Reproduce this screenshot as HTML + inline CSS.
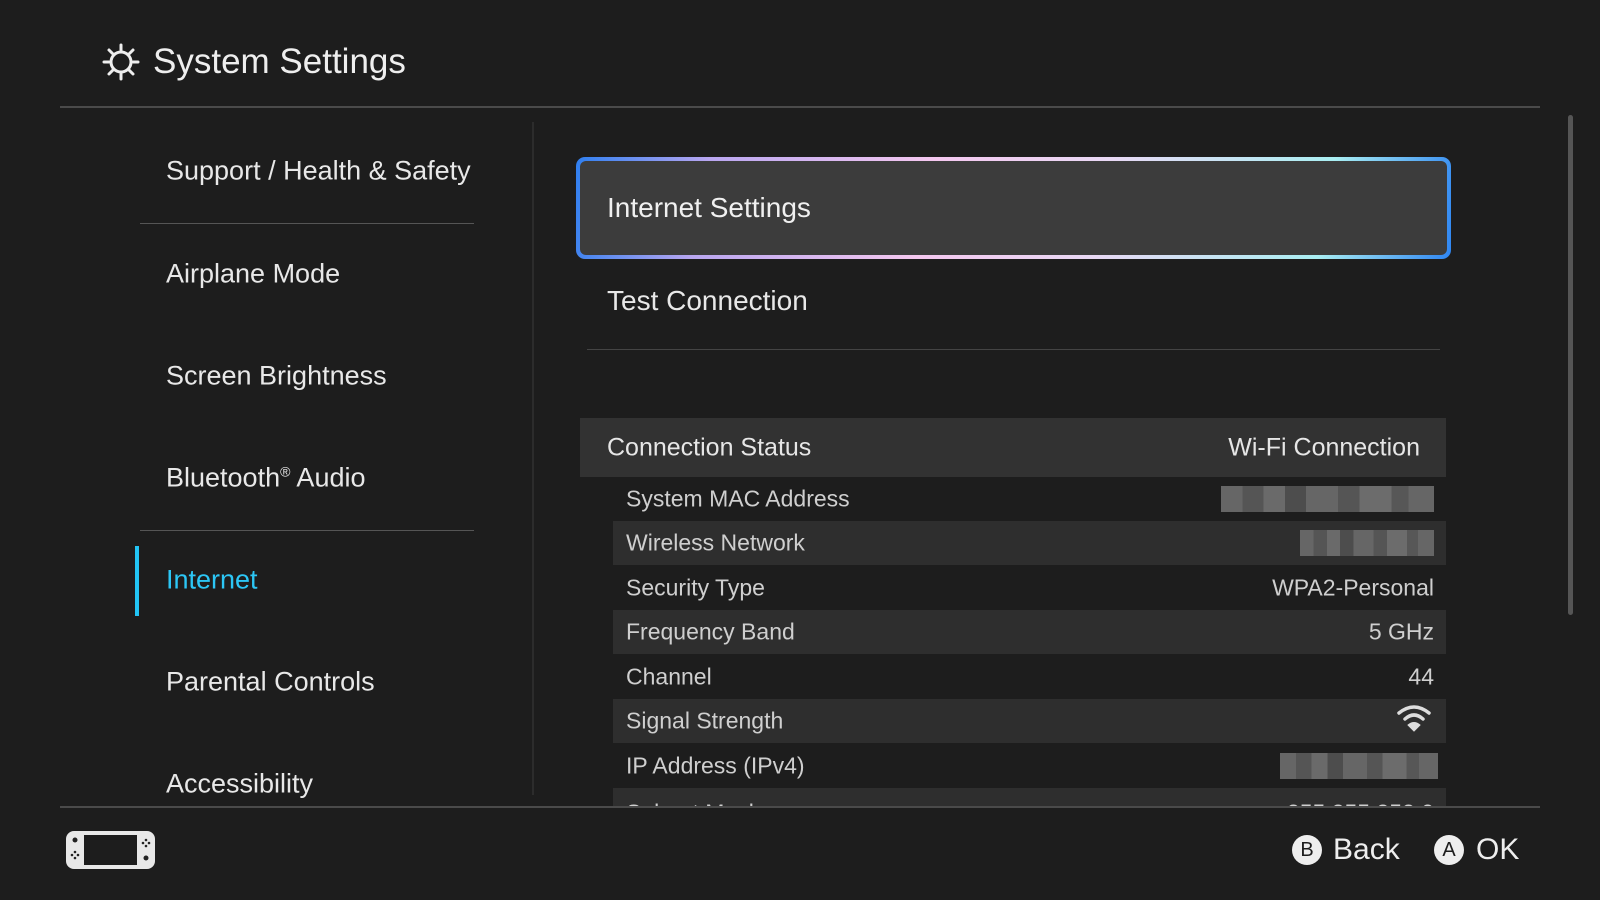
<!DOCTYPE html>
<html><head><meta charset="utf-8"><style>
*{margin:0;padding:0;box-sizing:border-box}
body{width:1600px;height:900px;background:#1d1d1d;font-family:"Liberation Sans",sans-serif;color:#e6e6e6;position:relative;overflow:hidden}
.a{position:absolute;white-space:nowrap}
.menu{left:166px;font-size:27px;color:#e8e8e8;transform:translateY(-50%)}
.hl{position:absolute;height:1px;background:#555}
.row{position:absolute;left:613px;width:833px;height:44px;font-size:23px;color:#cfcfcf}
.row.s{background:#2e2e2e}
.row span{position:absolute;top:50%;transform:translateY(-50%)}
.row .l{left:13px}.row .r{right:12px}
.blur{height:26px;background:linear-gradient(90deg,#666 0 10%,#555 10% 20%,#6a6a6a 20% 30%,#4d4d4d 30% 40%,#666 40% 55%,#555 55% 65%,#6c6c6c 65% 80%,#575757 80% 88%,#666 88%)}
</style></head><body>
<svg class="a" style="left:101px;top:42px" width="40" height="40" viewBox="0 0 40 40" fill="none" stroke="#eee" stroke-width="3"><circle cx="20" cy="20" r="10"/><g stroke-linecap="round"><line x1="20" y1="3" x2="20" y2="8"/><line x1="20" y1="32" x2="20" y2="37"/><line x1="3" y1="20" x2="8" y2="20"/><line x1="32" y1="20" x2="37" y2="20"/><line x1="8" y1="8" x2="11.5" y2="11.5"/><line x1="28.5" y1="28.5" x2="32" y2="32"/><line x1="8" y1="32" x2="11.5" y2="28.5"/><line x1="28.5" y1="11.5" x2="32" y2="8"/></g></svg>
<div class="a" style="left:153px;top:42px;font-size:35px;color:#eee">System Settings</div>
<div class="hl" style="left:60px;top:106px;width:1480px;background:#4a4a4a;height:2px"></div>

<div class="a menu" style="top:171px">Support / Health &amp; Safety</div>
<div class="hl" style="left:140px;top:223px;width:334px"></div>
<div class="a menu" style="top:274px">Airplane Mode</div>
<div class="a menu" style="top:376px">Screen Brightness</div>
<div class="a menu" style="top:478px">Bluetooth<sup style="font-size:14px">®</sup> Audio</div>
<div class="hl" style="left:140px;top:530px;width:334px"></div>
<div class="a" style="left:135px;top:546px;width:4px;height:70px;background:#22c4f4"></div>
<div class="a menu" style="top:580px;color:#2cc6f5">Internet</div>
<div class="a menu" style="top:682px">Parental Controls</div>
<div class="a menu" style="top:784px">Accessibility</div>
<div class="a" style="left:532px;top:122px;width:2px;height:673px;background:#2c2c2c"></div>

<div class="a" style="left:576px;top:157px;width:875px;height:102px;border-radius:9px;padding:4px;background:linear-gradient(100deg,#2f7ff0 0%,#b9a6f0 15%,#f4c7ef 40%,#e8d8f4 60%,#a9eef2 85%,#2f86f2 100%)">
<div style="width:100%;height:100%;background:#3c3c3c;border-radius:6px;position:relative"><span class="a" style="left:27px;top:50%;transform:translateY(-50%);font-size:28px;color:#f0f0f0">Internet Settings</span></div></div>
<div class="a menu" style="left:607px;top:301px;font-size:28px">Test Connection</div>
<div class="hl" style="left:587px;top:349px;width:853px;background:#444"></div>

<div class="a" style="left:580px;top:418px;width:866px;height:59px;background:#323232;font-size:25px;color:#e6e6e6">
<span class="a" style="left:27px;top:50%;transform:translateY(-50%)">Connection Status</span>
<span class="a" style="right:26px;top:50%;transform:translateY(-50%)">Wi-Fi Connection</span></div>

<div style="position:absolute;left:0;top:0;width:1600px;height:807px;overflow:hidden">
<div class="row" style="top:477px"><span class="l">System MAC Address</span><span class="r blur" style="width:213px"></span></div>
<div class="row s" style="top:521px"><span class="l">Wireless Network</span><span class="r blur" style="width:134px"></span></div>
<div class="row" style="top:566px"><span class="l">Security Type</span><span class="r">WPA2-Personal</span></div>
<div class="row s" style="top:610px"><span class="l">Frequency Band</span><span class="r">5 GHz</span></div>
<div class="row" style="top:655px"><span class="l">Channel</span><span class="r">44</span></div>
<div class="row s" style="top:699px"><span class="l">Signal Strength</span><span class="r" style="right:14px"><svg width="36" height="28" viewBox="0 0 36 28" fill="none" stroke="#ddd" stroke-width="3.5" stroke-linecap="round"><path d="M3 9 Q18 -3 33 9"/><path d="M9 15 Q18 7 27 15"/><path d="M18 27 L12 21 Q18 16 24 21 Z" fill="#ddd" stroke-width="1"/></svg></span></div>
<div class="row" style="top:744px"><span class="l">IP Address (IPv4)</span><span class="r blur" style="width:158px;right:8px"></span></div>
<div class="row s" style="top:788px"><span class="l" style="top:25px">Subnet Mask</span><span class="r" style="top:25px">255.255.252.0</span></div>
</div>

<div class="a" style="left:1568px;top:115px;width:5px;height:500px;background:#555;border-radius:3px"></div>
<div class="hl" style="left:60px;top:806px;width:1480px;background:#4a4a4a;height:2px"></div>

<svg class="a" style="left:66px;top:831px" width="89" height="38" viewBox="0 0 89 38"><rect x="0" y="0" width="89" height="38" rx="8" fill="#e8e8e8"/><rect x="18" y="4" width="53" height="30" fill="#1d1d1d"/><g fill="#222"><circle cx="9" cy="9" r="2.5"/><circle cx="9" cy="21" r="1.3"/><circle cx="6" cy="24" r="1.3"/><circle cx="12" cy="24" r="1.3"/><circle cx="9" cy="27" r="1.3"/><circle cx="80" cy="9" r="1.3"/><circle cx="77" cy="12" r="1.3"/><circle cx="83" cy="12" r="1.3"/><circle cx="80" cy="15" r="1.3"/><circle cx="80" cy="27" r="2.5"/></g></svg>

<div class="a" style="left:1292px;top:835px;width:30px;height:30px;border-radius:50%;background:#eee;color:#1d1d1d;font-size:20px;text-align:center;line-height:30px">B</div>
<div class="a" style="left:1333px;top:833px;font-size:30px;color:#eee">Back</div>
<div class="a" style="left:1434px;top:835px;width:30px;height:30px;border-radius:50%;background:#eee;color:#1d1d1d;font-size:20px;text-align:center;line-height:30px">A</div>
<div class="a" style="left:1476px;top:833px;font-size:30px;color:#eee">OK</div>
</body></html>
